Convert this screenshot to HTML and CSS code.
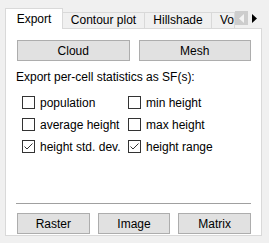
FILE: index.html
```html
<!DOCTYPE html>
<html lang="en">
<head>
    <meta charset="UTF-8">
    <title>Export</title>
    <link rel="stylesheet" href="styles.css">
</head>
<body>
    <div class="window">
        <div class="tabbar">
            <div class="tab active">Export</div>
            <div class="tab contour">Contour plot</div>
            <div class="tab hill">Hillshade</div>
            <div class="tab cut">Vo</div>
            <div class="scroller">
                <div class="arrow disabled"><svg width="5" height="9" viewBox="0 0 5 9"><path d="M5 0 L0 4.5 L5 9 Z" fill="#f4f4f4"/></svg></div>
                <div class="arrow"><svg width="5" height="9" viewBox="0 0 5 9"><path d="M0 0 L5 4.5 L0 9 Z" fill="#000"/></svg></div>
            </div>
        </div>
        <div class="pane">
            <div class="row two">
                <button class="btn">Cloud</button>
                <button class="btn">Mesh</button>
            </div>
            <p class="caption">Export per-cell statistics as SF(s):</p>
            <div class="checks">
                <label class="check"><span class="box"></span>population</label>
                <label class="check"><span class="box"></span>min height</label>
                <label class="check"><span class="box"></span>average height</label>
                <label class="check"><span class="box"></span>max height</label>
                <label class="check"><span class="box"><svg width="11" height="11" viewBox="0 0 11 11"><path d="M1.5 5.5 L4 8 L9.5 2.5" fill="none" stroke="#333" stroke-width="1"/></svg></span>height std. dev.</label>
                <label class="check"><span class="box"><svg width="11" height="11" viewBox="0 0 11 11"><path d="M1.5 5.5 L4 8 L9.5 2.5" fill="none" stroke="#333" stroke-width="1"/></svg></span>height range</label>
            </div>
            <div class="spacer"></div>
            <hr class="sep">
            <div class="row three">
                <button class="btn">Raster</button>
                <button class="btn">Image</button>
                <button class="btn">Matrix</button>
            </div>
        </div>
    </div>
</body>
</html>
```

FILE: styles.css
```css
body {
    margin: 0;
    background-color: #f0f0f0;
    font-family: 'Liberation Sans', Arial, sans-serif;
    font-size: 12px;
    color: #000;
}

.window {
    width: 262px;
    height: 243px;
    padding: 8px 0 0 5px;
    box-sizing: border-box;
}

.tabbar {
    display: flex;
    align-items: flex-end;
    height: 20px;
    position: relative;
    z-index: 1;
}

.tab {
    height: 16px;
    box-sizing: border-box;
    border: 1px solid #d9d9d9;
    border-bottom: none;
    border-left: none;
    background-color: #f0f0f0;
    line-height: 15px;
    text-align: center;
    white-space: nowrap;
}

.tab.active {
    width: 58px;
    height: 21px;
    margin-bottom: -1px;
    border-left: 1px solid #d9d9d9;
    background-color: #fff;
    padding-top: 3px;
}

.tab.contour {
    width: 82px;
}

.tab.hill {
    width: 67px;
}

.tab.cut {
    width: 23px;
    padding-left: 8px;
    text-align: left;
    overflow: hidden;
}

.scroller {
    display: flex;
    align-self: flex-start;
    margin-top: 3px;
}

.arrow {
    width: 13px;
    height: 14px;
    display: flex;
    align-items: center;
    justify-content: center;
    background-color: #f0f0f0;
}

.arrow.disabled {
    background-color: #cdcdcd;
}

.pane {
    height: 208px;
    box-sizing: border-box;
    border: 1px solid #d9d9d9;
    background-color: #fff;
    padding: 11px 10px 1px 11px;
    display: flex;
    flex-direction: column;
}

.row {
    display: flex;
    gap: 9px;
}

.btn {
    flex: 1;
    height: 21px;
    border: 1px solid #adadad;
    background-color: #e1e1e1;
    font-family: inherit;
    font-size: 12px;
    color: #000;
    padding: 0;
}

.three {
    gap: 8px;
}

.caption {
    margin: 9px 0 0 -1px;
    line-height: 15px;
}

.checks {
    display: grid;
    grid-template-columns: 106px 1fr;
    row-gap: 9px;
    margin: 11px 0 0 5px;
}

.check {
    display: flex;
    align-items: center;
    gap: 5px;
    height: 13px;
}

.box {
    width: 13px;
    height: 13px;
    box-sizing: border-box;
    border: 1px solid #333;
    background-color: #fff;
    display: flex;
    align-items: center;
    justify-content: center;
}

.spacer {
    flex: 1;
}

.sep {
    margin: 0 0 9px -1px;
    border: none;
    border-top: 1px solid #a0a0a0;
    height: 0;
}
```
